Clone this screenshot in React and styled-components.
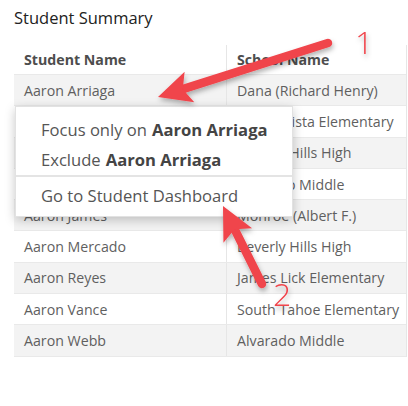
import React from 'react';
import styled, { createGlobalStyle } from 'styled-components';

const GlobalStyle = createGlobalStyle`
  html, body {
    margin: 0;
    padding: 0;
    background: #fff;
  }
  body {
    font-family: 'Open Sans', 'Noto Sans', sans-serif;
    color: #595959;
  }
`;

const rows = [
  ['Aaron Arriaga', 'Dana (Richard Henry)'],
  ['Aaron Baker', 'Buena Vista Elementary'],
  ['Aaron Bell', 'Beverly Hills High'],
  ['Aaron Davis', 'Alvarado Middle'],
  ['Aaron James', 'Monroe (Albert F.)'],
  ['Aaron Mercado', 'Beverly Hills High'],
  ['Aaron Reyes', 'James Lick Elementary'],
  ['Aaron Vance', 'South Tahoe Elementary'],
  ['Aaron Webb', 'Alvarado Middle'],
];

const Page = styled.div`
  position: relative;
  width: 408px;
  height: 406px;
  overflow: hidden;
  padding: 6px 0 0 14px;
  box-sizing: border-box;
`;

const Title = styled.h2`
  margin: 0;
  font-size: 16.5px;
  font-weight: 400;
  line-height: 24px;
  color: #222;
`;

const Table = styled.div`
  margin-top: 15px;
  width: 392px;
  border-right: 1px solid #e6e6e6;
`;

const Row = styled.div`
  display: grid;
  grid-template-columns: 212px 1fr;
  box-sizing: border-box;
  height: ${(p) => (p.$head ? '30px' : '31.3px')};
  background: ${(p) => (p.$shade ? '#f3f3f3' : '#fff')};
  border-bottom: 1px solid #e9e9e9;
  font-size: 14.2px;
  font-weight: ${(p) => (p.$head ? 700 : 400)};
  color: ${(p) => (p.$head ? '#4d4d4d' : '#5f5f5f')};
`;

const Cell = styled.div`
  display: flex;
  align-items: center;
  padding-left: 10px;
  white-space: nowrap;
  overflow: hidden;
  & + & {
    border-left: 1px solid #e6e6e6;
  }
`;

const Menu = styled.div`
  position: absolute;
  left: 15px;
  top: 106px;
  width: 278px;
  background: #fff;
  border: 1px solid #e2e2e2;
  box-shadow: 0 3px 10px rgba(0, 0, 0, 0.22);
  padding: 7px 0 6px;
  box-sizing: border-box;
`;

const Item = styled.div`
  padding: 0 0 0 25px;
  height: 30px;
  display: flex;
  align-items: center;
  font-size: 16.6px;
  color: #555;
  white-space: nowrap;
  b {
    font-weight: 700;
    color: #444;
    margin-left: 5px;
  }
`;

const Divider = styled.div`
  height: 2px;
  background: #e4e4e4;
  margin: 1px 0 3px;
`;

const Overlay = styled.svg`
  position: absolute;
  left: 0;
  top: 0;
  pointer-events: none;
`;

const Num = styled.text`
  font-family: 'Open Sans', sans-serif;
  font-size: 32px;
  font-weight: 300;
  fill: #f0444b;
`;

function Arrow({ x1, y1, x2, y2 }) {
  const dx = x2 - x1;
  const dy = y2 - y1;
  const len = Math.hypot(dx, dy);
  const ux = dx / len;
  const uy = dy / len;
  const px = -uy;
  const py = ux;
  const headLen = 33;
  const headW = 16;
  const bx = x2 - ux * headLen;
  const by = y2 - uy * headLen;
  const sx = x2 - ux * (headLen - 7);
  const sy = y2 - uy * (headLen - 7);
  return (
    <g filter="url(#sh)">
      <line x1={x1} y1={y1} x2={sx} y2={sy} stroke="#f0444b" strokeWidth="8.5" strokeLinecap="round" />
      <polygon
        points={`${x2},${y2} ${bx + px * headW},${by + py * headW} ${sx},${sy} ${bx - px * headW},${by - py * headW}`}
        fill="#f0444b"
      />
    </g>
  );
}

export default function App() {
  return (
    <>
      <GlobalStyle />
      <Page>
        <Title>Student Summary</Title>
        <Table>
          <Row $head>
            <Cell>Student Name</Cell>
            <Cell>School Name</Cell>
          </Row>
          {rows.map((r, i) => (
            <Row key={i} $shade={i % 2 === 0}>
              <Cell>{r[0]}</Cell>
              <Cell>{r[1]}</Cell>
            </Row>
          ))}
        </Table>
        <Menu>
          <Item>
            Focus only on<b>Aaron Arriaga</b>
          </Item>
          <Item>
            Exclude<b>Aaron Arriaga</b>
          </Item>
          <Divider />
          <Item>Go to Student Dashboard</Item>
        </Menu>
        <Overlay width="408" height="406" viewBox="0 0 408 406">
          <defs>
            <filter id="sh" x="-20%" y="-20%" width="140%" height="140%">
              <feDropShadow dx="1" dy="3" stdDeviation="2.5" floodColor="#000" floodOpacity="0.3" />
            </filter>
          </defs>
          <Arrow x1={328} y1={43} x2={158} y2={97} />
          <Arrow x1={262} y1={284} x2={223} y2={206} />
          <Num x="355" y="54" filter="url(#sh)">1</Num>
          <Num x="273" y="306" filter="url(#sh)">2</Num>
        </Overlay>
      </Page>
    </>
  );
}
